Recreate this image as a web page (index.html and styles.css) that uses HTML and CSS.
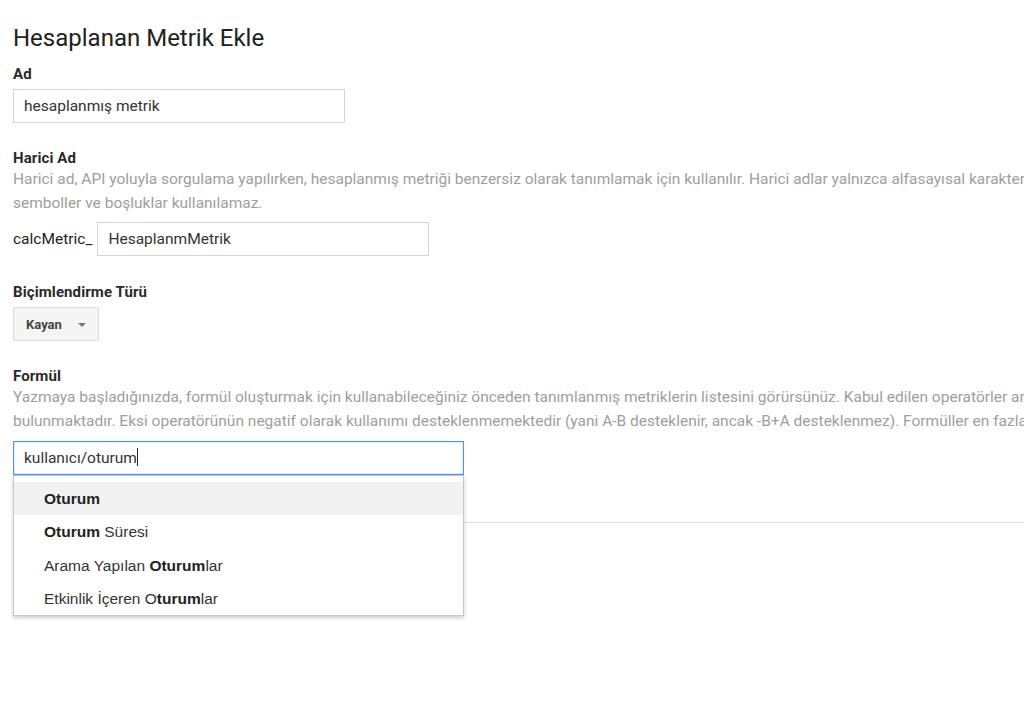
FILE: index.html
```html
<!DOCTYPE html>
<html lang="tr">
<head>
<meta charset="utf-8">
<title>Hesaplanan Metrik Ekle</title>
<link rel="stylesheet" href="styles.css">
</head>
<body>
<div class="page">
  <h1 class="title">Hesaplanan Metrik Ekle</h1>

  <section class="field field-ad">
    <div class="label">Ad</div>
    <div class="input input-name">hesaplanmış metrik</div>
  </section>

  <section class="field field-ext">
    <div class="label">Harici Ad</div>
    <div class="desc">
      <span class="desc-line">Harici ad, API yoluyla sorgulama yapılırken, hesaplanmış metriği benzersiz olarak tanımlamak için kullanılır. Harici adlar yalnızca alfasayısal karakterler ve alt çizgi içerebilir; diğer</span>
      <span class="desc-line">semboller ve boşluklar kullanılamaz.</span>
    </div>
    <div class="ext-row">
      <span class="prefix">calcMetric_</span>
      <div class="input input-ext">HesaplanmMetrik</div>
    </div>
  </section>

  <section class="field field-fmt">
    <div class="label">Biçimlendirme Türü</div>
    <button class="select-btn" type="button">Kayan <span class="caret"></span></button>
  </section>

  <section class="field field-formula">
    <div class="label">Formül</div>
    <div class="desc">
      <span class="desc-line">Yazmaya başladığınızda, formül oluşturmak için kullanabileceğiniz önceden tanımlanmış metriklerin listesini görürsünüz. Kabul edilen operatörler arasında +, -, *, / ve parantezler</span>
      <span class="desc-line">bulunmaktadır. Eksi operatörünün negatif olarak kullanımı desteklenmemektedir (yani A-B desteklenir, ancak -B+A desteklenmez). Formüller en fazla 1024 karakter olabilir.</span>
    </div>
    <div class="formula-wrap">
      <div class="input input-formula">kullanıcı/oturum<span class="cursor"></span></div>
      <ul class="suggest">
        <li class="suggest-item active"><b>Oturum</b></li>
        <li class="suggest-item"><b>Oturum</b> Süresi</li>
        <li class="suggest-item">Arama Yapılan <b>Oturum</b>lar</li>
        <li class="suggest-item">Etkinlik İçeren O<b>turum</b>lar</li>
      </ul>
    </div>
  </section>

  <hr class="divider">
</div>
</body>
</html>
```

FILE: styles.css
```css
html, body {
  margin: 0;
  padding: 0;
  background: #fff;
  overflow: hidden;
}

body {
  font-family: Roboto, "Liberation Sans", Arial, sans-serif;
  color: #333;
  width: 1024px;
  height: 723px;
}

.page {
  padding: 24px 0 0 13px;
}

.title {
  margin: 0;
  font-size: 24px;
  font-weight: 400;
  line-height: 28px;
  color: #212121;
}

.field {
  display: flex;
  flex-direction: column;
  align-items: flex-start;
}

.field-ad { margin-top: 12px; }
.field-ext { margin-top: 25px; }
.field-fmt { margin-top: 26px; }
.field-formula { margin-top: 25px; }

.label {
  font-size: 15px;
  font-weight: 700;
  line-height: 20px;
  letter-spacing: 0.1px;
  color: #2a2a2a;
}

.desc {
  display: flex;
  flex-direction: column;
  margin-top: -1px;
  width: 1011px;
  overflow: hidden;
}

.desc-line {
  display: block;
  white-space: nowrap;
  font-size: 15.5px;
  line-height: 24px;
  color: #9e9e9e;
}

.input {
  box-sizing: border-box;
  height: 34px;
  border: 1px solid #d5d5d5;
  padding: 0 10px;
  font-size: 15.5px;
  line-height: 32px;
  color: #333;
  background: #fff;
}

.input-name {
  margin-top: 5px;
  width: 332px;
}

.ext-row {
  display: flex;
  align-items: center;
  gap: 5px;
  margin-top: 7px;
}

.prefix {
  font-size: 15.5px;
  color: #222;
}

.input-ext {
  width: 332px;
}

.select-btn {
  margin-top: 5px;
  box-sizing: border-box;
  height: 34px;
  width: 86px;
  padding: 0 0 0 12px;
  display: flex;
  align-items: center;
  gap: 16px;
  background: #f5f5f5;
  border: 1px solid #dcdcdc;
  border-radius: 2px;
  font-family: Roboto, "Liberation Sans", Arial, sans-serif;
  font-size: 13px;
  font-weight: 700;
  color: #444;
}

.caret {
  width: 0;
  height: 0;
  border-left: 4px solid transparent;
  border-right: 4px solid transparent;
  border-top: 4px solid #777;
  margin-top: 2px;
}

.formula-wrap {
  position: relative;
  margin-top: 8px;
}

.input-formula {
  width: 451px;
  border-color: #4d90fe;
  box-shadow: inset 0 0 0 0.5px rgba(77,144,254,0.3);
}

.cursor {
  display: inline-block;
  width: 1px;
  height: 18px;
  background: #222;
  vertical-align: -3px;
}

.suggest {
  position: absolute;
  top: 34px;
  left: 0;
  width: 451px;
  box-sizing: border-box;
  margin: 0;
  padding: 6px 0 0;
  list-style: none;
  background: #fff;
  border: 1px solid #c6c6c6;
  box-shadow: 0 2px 4px rgba(0,0,0,0.2);
  z-index: 2;
}

.suggest-item {
  height: 33.3px;
  line-height: 33px;
  padding-left: 30px;
  font-family: "Liberation Sans", Arial, sans-serif;
  font-size: 15.5px;
  color: #333;
}

.suggest-item b {
  color: #222;
}

.suggest-item.active {
  background: #f1f1f1;
}

.divider {
  margin: 47px 0 0 0;
  border: 0;
  border-top: 1px solid #e0e0e0;
  width: 1011px;
}
```
